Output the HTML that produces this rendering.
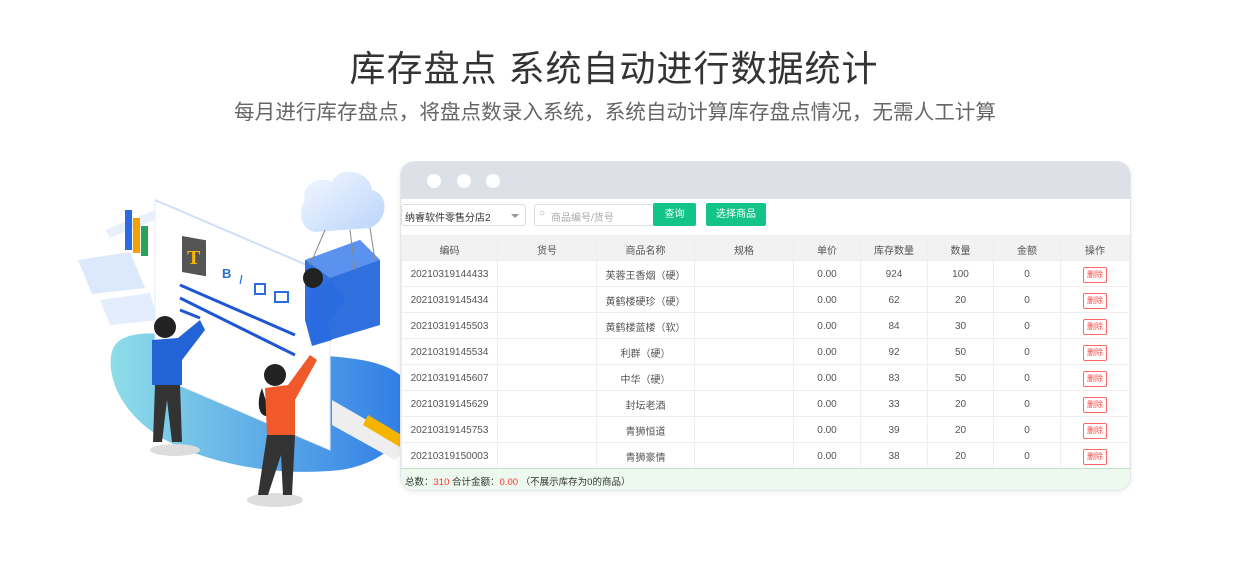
<!DOCTYPE html>
<html><head><meta charset="utf-8"><style>
*{margin:0;padding:0;box-sizing:border-box}
body{width:1248px;height:564px;background:#fff;font-family:"Liberation Sans","Noto Sans CJK SC",sans-serif;position:relative;overflow:hidden}
.t1{position:absolute;top:40px;left:0;width:1228px;text-align:center;font-size:36px;color:#333;letter-spacing:1px}
.t2{position:absolute;top:95px;left:0;width:1230px;text-align:center;font-size:20.6px;color:#666}
.win{position:absolute;left:400px;top:161px;width:731px;height:330px;border:1px solid #e3e6ea;border-radius:14px;overflow:hidden;background:#fff;box-shadow:0 2px 6px rgba(0,0,0,.06)}
.bar{height:37px;background:#dde1e7;position:relative}
.dot{position:absolute;top:12px;width:14px;height:14px;border-radius:50%;background:#fff}
.sel{position:absolute;left:0;top:42px;width:125px;height:22px;border:1px solid #ddd;border-radius:3px;font-size:10px;color:#333;padding:4px 3px}
.sel:after{content:"";position:absolute;right:6px;top:9px;border:4px solid transparent;border-top-color:#999}
.inp{position:absolute;left:133px;top:42px;width:120px;height:22px;border:1px solid #ddd;border-radius:3px;font-size:10px;color:#aaa;padding:4px 16px}
.btn{position:absolute;top:41px;height:23px;background:#12c487;color:#fff;font-size:10px;text-align:center;line-height:23px;border-radius:2px}
table{position:absolute;left:0;top:73px;width:729px;border-collapse:collapse;font-size:10px;color:#555}
td,th{height:26px;border:1px solid #eee;text-align:center;font-weight:normal;padding-top:2px}
th{background:#f2f2f2;color:#555;height:25px}
.del{display:inline-block;border:1px solid #f66;color:#f44;border-radius:2px;font-size:8px;padding:1px 3px;line-height:12px}
.foot{position:absolute;left:0;top:306px;width:729px;height:23px;background:#edf8ee;border-top:1px solid #bde5c4;font-size:9.5px;color:#333;padding:5px 4px}
.foot b{color:#f33;font-weight:normal}
</style></head><body>
<div class="t1">库存盘点 系统自动进行数据统计</div>
<div class="t2">每月进行库存盘点，将盘点数录入系统，系统自动计算库存盘点情况，无需人工计算</div>

<svg style="position:absolute;left:70px;top:160px" width="360" height="360" viewBox="0 0 360 360">
<defs><linearGradient id="g1" x1="0" y1="0" x2="1" y2="0"><stop offset="0" stop-color="#8fdde8"/><stop offset="1" stop-color="#2e7be6"/></linearGradient>
<linearGradient id="g2" x1="0" y1="0" x2="1" y2="1"><stop offset="0" stop-color="#f4f8ff"/><stop offset="1" stop-color="#b9d4fb"/></linearGradient></defs>
<path d="M45 185 C60 165 110 175 160 185 C230 200 300 190 330 215 C355 240 340 300 270 310 C200 318 120 300 80 270 C40 240 35 200 45 185Z" fill="url(#g1)"/>
<path d="M8 100 L60 92 L75 128 L22 134Z" fill="#dce9fc"/>
<path d="M30 140 L80 133 L88 160 L40 165Z" fill="#e3edfc"/>
<path d="M85 40 L260 115 L260 290 L85 215Z" fill="#fff" stroke="#e6ecf5"/>
<path d="M85 40 L260 115" stroke="#cfdff8" stroke-width="2"/>
<rect x="112" y="76" width="24" height="36" fill="#555" transform="skewY(10)" transform-origin="112 76"/>
<text x="117" y="104" font-size="20" font-weight="bold" fill="#f5b400" font-family="Liberation Serif,serif">T</text>
<text x="152" y="118" font-size="13" fill="#2a6be0" font-weight="bold">B</text>
<text x="169" y="124" font-size="13" fill="#2a6be0" font-style="italic">I</text>
<rect x="185" y="124" width="10" height="10" fill="none" stroke="#2a6be0" stroke-width="2"/>
<rect x="205" y="132" width="13" height="10" fill="none" stroke="#2a6be0" stroke-width="2"/>
<path d="M110 125 L225 175 M110 138 L225 195 M110 150 L130 158" stroke="#1f56d4" stroke-width="3"/>
<path d="M235 100 L290 80 L310 100 L310 165 L260 180 L235 160Z" fill="#2f6fde"/>
<path d="M235 100 L290 80 L310 100 L260 118Z" fill="#5c92ef"/>
<path d="M235 40 C230 25 250 15 262 22 C268 5 300 10 302 30 C320 35 318 60 300 68 L245 72 C230 70 228 50 235 40Z" fill="url(#g2)"/>
<path d="M255 70 L240 105 M280 70 L285 110 M300 68 L305 100" stroke="#888" stroke-width="1"/>
<circle cx="243" cy="118" r="10" fill="#222"/>
<path d="M240 130 L262 120 L275 140 L250 175 L240 165Z" fill="#2a6be0"/>
<path d="M235 160 L255 155 L262 180 L242 186Z" fill="#2a6be0"/>
<ellipse cx="105" cy="290" rx="25" ry="6" fill="#ddd"/>
<circle cx="95" cy="167" r="11" fill="#222"/>
<path d="M82 180 L108 178 L130 160 L135 170 L112 200 L112 225 L82 225Z" fill="#2264d6"/>
<path d="M85 225 L110 225 L112 282 L102 282 L97 240 L92 282 L83 282Z" fill="#333"/>
<ellipse cx="205" cy="340" rx="28" ry="7" fill="#ddd"/>
<circle cx="205" cy="215" r="11" fill="#222"/>
<path d="M192 228 C185 245 190 260 200 255Z" fill="#222"/>
<path d="M195 228 L218 225 L240 195 L247 200 L225 240 L225 275 L197 275Z" fill="#f05a2a"/>
<path d="M197 275 L225 275 L222 335 L213 335 L211 295 L198 335 L188 335Z" fill="#333"/>
<path d="M262 240 L340 285 L325 300 L262 265Z" fill="#eee"/>
<path d="M298 255 L340 280 L335 290 L293 265Z" fill="#f5b400"/>
<path d="M35 70 L85 50 L85 60 L40 78Z" fill="#e8f0fc"/>
<rect x="55" y="50" width="7" height="40" fill="#2a6be0"/><rect x="63" y="58" width="7" height="35" fill="#f5a000"/><rect x="71" y="66" width="7" height="30" fill="#2aa25a"/>
</svg>

<div class="win">
<div class="bar"><div class="dot" style="left:26px"></div><div class="dot" style="left:56px"></div><div class="dot" style="left:85px"></div></div>
<div class="sel">纳睿软件零售分店2</div>
<div class="inp">商品编号/货号<span style="position:absolute;left:4px;top:3px;color:#aaa">○</span></div>
<div class="btn" style="left:252px;width:43px">查询</div>
<div class="btn" style="left:305px;width:60px">选择商品</div>
<table>
<tr><th style="width:96px">编码</th><th style="width:99px">货号</th><th style="width:98px">商品名称</th><th style="width:99px">规格</th><th style="width:67px">单价</th><th style="width:67px">库存数量</th><th style="width:66px">数量</th><th style="width:67px">金额</th><th>操作</th></tr>
<tr><td>20210319144433</td><td></td><td>芙蓉王香烟（硬）</td><td></td><td>0.00</td><td>924</td><td>100</td><td>0</td><td><span class="del">删除</span></td></tr>
<tr><td>20210319145434</td><td></td><td>黄鹤楼硬珍（硬）</td><td></td><td>0.00</td><td>62</td><td>20</td><td>0</td><td><span class="del">删除</span></td></tr>
<tr><td>20210319145503</td><td></td><td>黄鹤楼蓝楼（软）</td><td></td><td>0.00</td><td>84</td><td>30</td><td>0</td><td><span class="del">删除</span></td></tr>
<tr><td>20210319145534</td><td></td><td>利群（硬）</td><td></td><td>0.00</td><td>92</td><td>50</td><td>0</td><td><span class="del">删除</span></td></tr>
<tr><td>20210319145607</td><td></td><td>中华（硬）</td><td></td><td>0.00</td><td>83</td><td>50</td><td>0</td><td><span class="del">删除</span></td></tr>
<tr><td>20210319145629</td><td></td><td>封坛老酒</td><td></td><td>0.00</td><td>33</td><td>20</td><td>0</td><td><span class="del">删除</span></td></tr>
<tr><td>20210319145753</td><td></td><td>青狮恒道</td><td></td><td>0.00</td><td>39</td><td>20</td><td>0</td><td><span class="del">删除</span></td></tr>
<tr><td>20210319150003</td><td></td><td>青狮豪情</td><td></td><td>0.00</td><td>38</td><td>20</td><td>0</td><td><span class="del">删除</span></td></tr>
</table>
<div class="foot">总数：<b>310</b> 合计金额：<b>0.00</b> （不展示库存为0的商品）</div>
</div>
</body></html>
